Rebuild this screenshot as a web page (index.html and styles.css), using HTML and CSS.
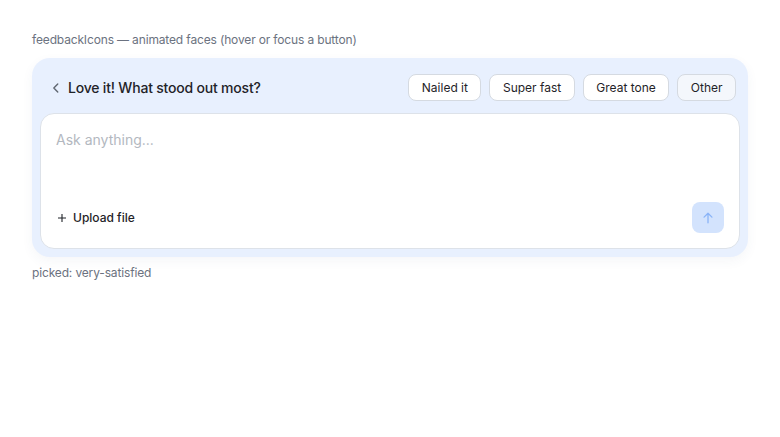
FILE: index.html
```html
<!DOCTYPE html>
<html lang="en">
  <head>
    <meta charset="UTF-8" />
    <meta name="viewport" content="width=device-width, initial-scale=1.0" />
    <title>feedbackIcons</title>
    <link rel="stylesheet" href="styles.css">
  </head>
  <body>
    <div class="demo">
      <p class="caption">feedbackIcons — animated faces (hover or focus a button)</p>
      <div class="composer">
        <div class="followup">
          <button class="back" type="button">
            <svg width="14" height="14" viewBox="0 0 16 16" fill="none" stroke="currentColor" stroke-width="1.6" stroke-linecap="round" stroke-linejoin="round"><path d="M10 3.5 5.5 8 10 12.5" /></svg>
            <span>Love it! What stood out most?</span>
          </button>
          <div class="chips">
            <button class="chip" type="button">Nailed it</button>
            <button class="chip" type="button">Super fast</button>
            <button class="chip" type="button">Great tone</button>
            <button class="chip chip-muted" type="button">Other</button>
          </div>
        </div>
        <div class="box">
          <textarea placeholder="Ask anything..."></textarea>
          <div class="actions">
            <button class="upload" type="button">
              <svg width="8" height="8" viewBox="0 0 8 8" stroke="currentColor" stroke-width="1.1"><path d="M4 0v8M0 4h8" /></svg>
              Upload file
            </button>
            <button class="send" type="button">
              <svg width="14" height="14" viewBox="0 0 16 16" fill="none" stroke="currentColor" stroke-width="1.5" stroke-linecap="round" stroke-linejoin="round"><path d="M8 13.5V2.5M3.5 7 8 2.5 12.5 7" /></svg>
            </button>
          </div>
        </div>
      </div>
      <p class="caption picked">picked: very-satisfied</p>
    </div>
  </body>
</html>
```

FILE: styles.css
```css
body {
  margin: 0;
  font-family: Inter, "Noto Sans", sans-serif;
  letter-spacing: -0.15px;
  background: #fff;
  color: #1f2328;
}

.demo {
  padding: 32px 32px;
}

.caption {
  margin: 0 0 10px;
  font-size: 12px;
  line-height: 16px;
  color: #6b7280;
}

.caption.picked {
  margin: 8px 0 0;
}

.composer {
  background: #e8f0fe;
  border-radius: 18px;
  padding: 16px 8px 8px 8px;
  box-shadow: 0 4px 12px rgba(60, 80, 120, 0.05);
}

.followup {
  display: flex;
  align-items: center;
  justify-content: space-between;
  padding-right: 4px;
  margin-bottom: 12px;
}

.back {
  display: flex;
  align-items: center;
  gap: 5px;
  border: 0;
  background: none;
  padding: 0 0 0 9px;
  font: inherit;
  font-size: 14px;
  font-weight: 500;
  letter-spacing: -0.2px;
  color: #1f2328;
  cursor: pointer;
}

.back svg {
  color: #5f6670;
}

.chips {
  display: flex;
  gap: 8px;
}

.chip {
  height: 27px;
  padding: 0 12.5px;
  border: 1px solid #d5dae1;
  border-radius: 8px;
  background: #fff;
  font: inherit;
  font-size: 12px;
  color: #1f2328;
  cursor: pointer;
}

.chip-muted {
  background: #f4f7fc;
}

.box {
  background: #fff;
  border: 1px solid #dde2e9;
  border-radius: 14px;
  padding: 15px 15px 15px 15px;
}

.box textarea {
  display: block;
  width: 100%;
  height: 60px;
  border: 0;
  outline: none;
  resize: none;
  padding: 0;
  font: inherit;
  font-size: 14px;
  line-height: 22px;
  color: #1f2328;
}

.box textarea::placeholder {
  color: #b3b8bf;
}

.actions {
  display: flex;
  align-items: center;
  justify-content: space-between;
  margin-top: 13px;
}

.upload {
  display: flex;
  align-items: center;
  gap: 7px;
  border: 0;
  background: none;
  padding: 0 0 0 2px;
  font: inherit;
  font-size: 12px;
  font-weight: 500;
  color: #1f2328;
  cursor: pointer;
}

.send {
  display: flex;
  align-items: center;
  justify-content: center;
  width: 32px;
  height: 31px;
  border: 0;
  border-radius: 8px;
  background: #d3e3fd;
  color: #8ab4f8;
  cursor: pointer;
}
```
